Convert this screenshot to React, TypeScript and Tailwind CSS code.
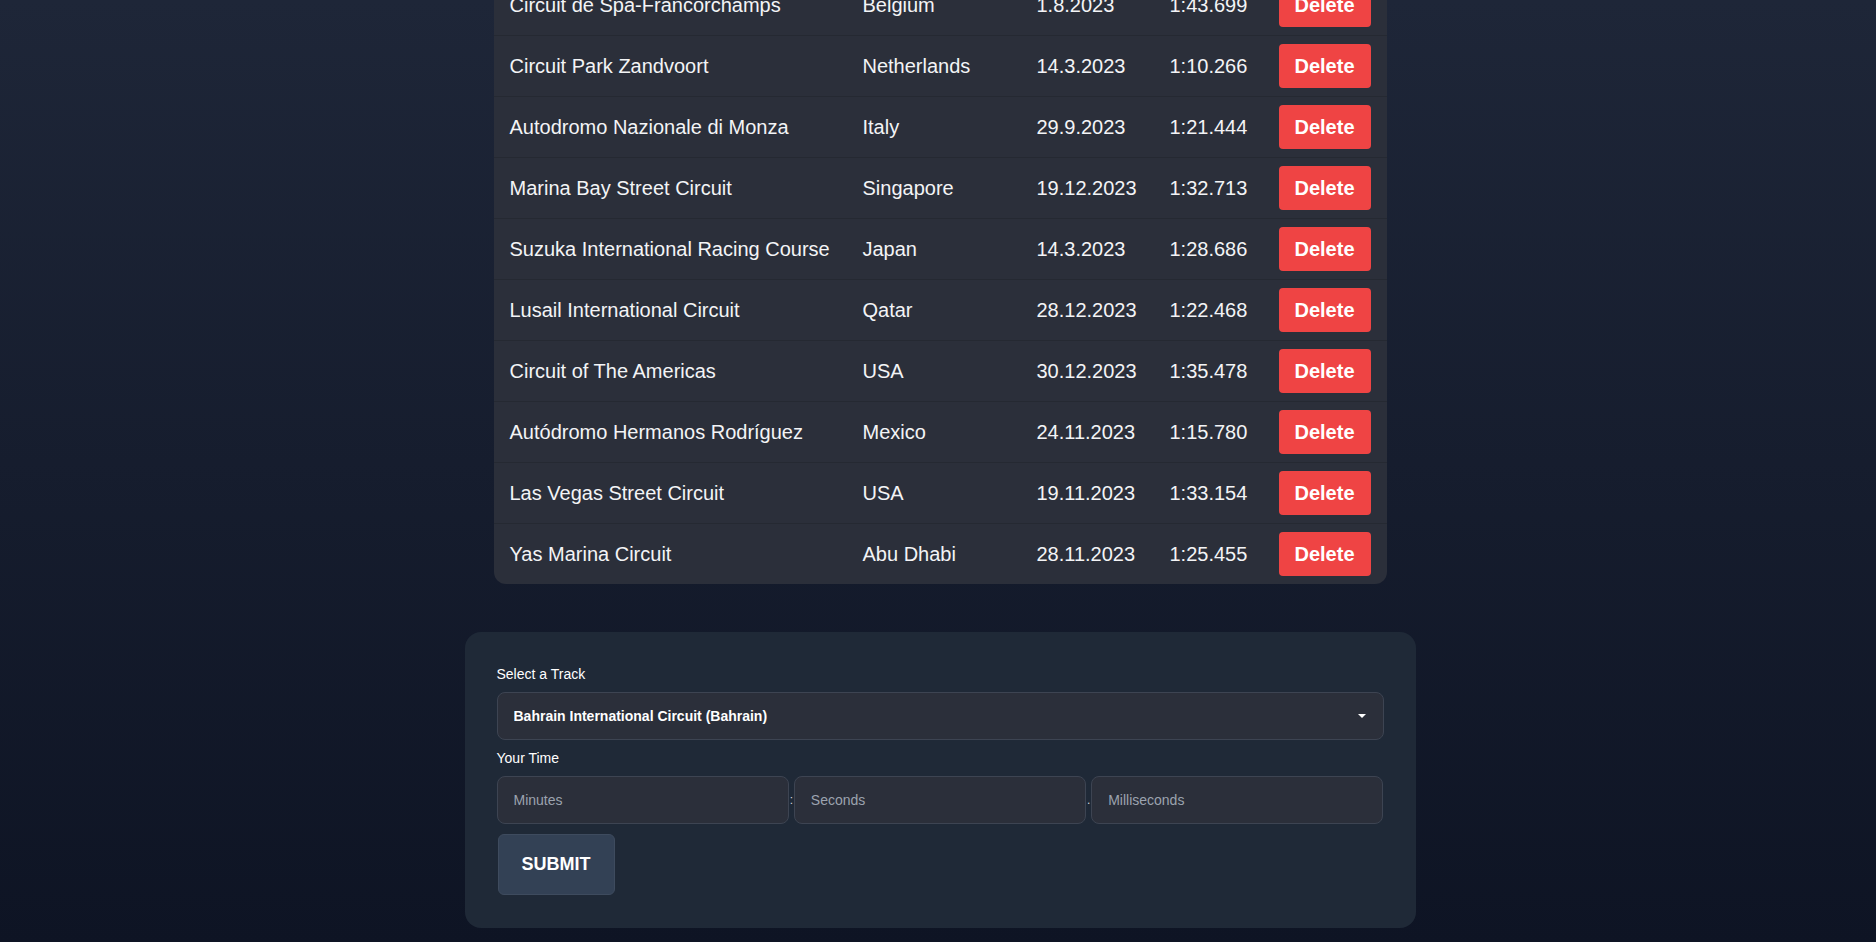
import { useState } from 'react'

type Lap = { id: number; track: string; country: string; date: string; time: string }

const initialLaps: Lap[] = [
  { id: 1,  track: 'Circuit de Spa-Francorchamps',       country: 'Belgium',     date: '1.8.2023',   time: '1:43.699' },
  { id: 2,  track: 'Circuit Park Zandvoort',             country: 'Netherlands', date: '14.3.2023',  time: '1:10.266' },
  { id: 3,  track: 'Autodromo Nazionale di Monza',       country: 'Italy',       date: '29.9.2023',  time: '1:21.444' },
  { id: 4,  track: 'Marina Bay Street Circuit',          country: 'Singapore',   date: '19.12.2023', time: '1:32.713' },
  { id: 5,  track: 'Suzuka International Racing Course', country: 'Japan',       date: '14.3.2023',  time: '1:28.686' },
  { id: 6,  track: 'Lusail International Circuit',       country: 'Qatar',       date: '28.12.2023', time: '1:22.468' },
  { id: 7,  track: 'Circuit of The Americas',            country: 'USA',         date: '30.12.2023', time: '1:35.478' },
  { id: 8,  track: 'Autódromo Hermanos Rodríguez',       country: 'Mexico',      date: '24.11.2023', time: '1:15.780' },
  { id: 9,  track: 'Las Vegas Street Circuit',           country: 'USA',         date: '19.11.2023', time: '1:33.154' },
  { id: 10, track: 'Yas Marina Circuit',                 country: 'Abu Dhabi',   date: '28.11.2023', time: '1:25.455' },
]

const tracks = [
  'Bahrain International Circuit (Bahrain)',
  'Jeddah Corniche Circuit (Saudi Arabia)',
  'Albert Park Circuit (Australia)',
  'Circuit de Spa-Francorchamps (Belgium)',
]

export default function App() {
  const [laps, setLaps]       = useState(initialLaps)
  const [track, setTrack]     = useState(tracks[0])
  const [minutes, setMinutes] = useState('')
  const [seconds, setSeconds] = useState('')
  const [millis, setMillis]   = useState('')

  const inputCls = 'flex-1 min-w-0 h-12 rounded-lg bg-[#2b2f3a] border border-[#3d4452] px-4 text-sm text-white placeholder:text-[#9ca3af] outline-none'

  return (
    <div className="h-screen overflow-hidden bg-gradient-to-b from-[#1e2638] to-[#0e1424] font-['Liberation_Sans',Arial,sans-serif] text-white">
      <div className="flex flex-col items-center pl-1">
        <div className="-mt-[25px] w-[893px] rounded-xl bg-[#2b2f3a] overflow-hidden">
          <table className="w-full table-fixed border-collapse text-xl text-[#f3f4f6]">
            <colgroup>
              <col className="w-[353px]" />
              <col className="w-[174px]" />
              <col className="w-[133px]" />
              <col className="w-[109px]" />
              <col className="w-[124px]" />
            </colgroup>
            <tbody>
              {laps.map((lap, i) => (
                <tr key={lap.id} className={i < laps.length - 1 ? 'border-b border-[#252932]' : ''}>
                  <td className="px-4 py-2 whitespace-nowrap">{lap.track}</td>
                  <td className="px-4 py-2 whitespace-nowrap">{lap.country}</td>
                  <td className="px-4 py-2 whitespace-nowrap">{lap.date}</td>
                  <td className="px-4 py-2 whitespace-nowrap">{lap.time}</td>
                  <td className="px-4 py-2">
                    <button
                      onClick={() => setLaps(laps.filter(l => l.id !== lap.id))}
                      className="h-11 rounded bg-[#ef4444] px-4 text-xl font-bold text-white"
                    >
                      Delete
                    </button>
                  </td>
                </tr>
              ))}
            </tbody>
          </table>
        </div>

        <form onSubmit={e => e.preventDefault()} className="mt-[48px] w-[951px] rounded-2xl bg-[#1f2937] p-8 pb-[33px]">
          <label className="block text-sm leading-5 mb-2">Select a Track</label>
          <div className="relative">
            <select
              value={track}
              onChange={e => setTrack(e.target.value)}
              className="w-full h-12 appearance-none rounded-lg bg-[#2b2f3a] border border-[#3d4452] px-4 text-sm font-bold text-white outline-none"
            >
              {tracks.map(t => <option key={t}>{t}</option>)}
            </select>
            <svg className="pointer-events-none absolute right-[18px] top-1/2 -translate-y-1/2" width="8" height="4" viewBox="0 0 8 4">
              <path d="M0 0h8L4 4z" fill="#fff" />
            </svg>
          </div>

          <label className="block text-sm leading-5 mt-2 mb-2">Your Time</label>
          <div className="flex items-center">
            <input value={minutes} onChange={e => setMinutes(e.target.value)} placeholder="Minutes" className={inputCls} />
            <span className="w-[5px] text-center text-xs text-[#d1d5db]">:</span>
            <input value={seconds} onChange={e => setSeconds(e.target.value)} placeholder="Seconds" className={inputCls} />
            <span className="w-[5px] text-center text-xs text-[#d1d5db]">.</span>
            <input value={millis} onChange={e => setMillis(e.target.value)} placeholder="Milliseconds" className={inputCls} />
          </div>

          <button type="submit" className="mt-[10px] ml-px h-[61px] rounded-md border border-[#3e4b5e] bg-[#334155] px-[23px] text-lg font-bold leading-[21px] text-white">
            SUBMIT
          </button>
        </form>
      </div>
    </div>
  )
}
